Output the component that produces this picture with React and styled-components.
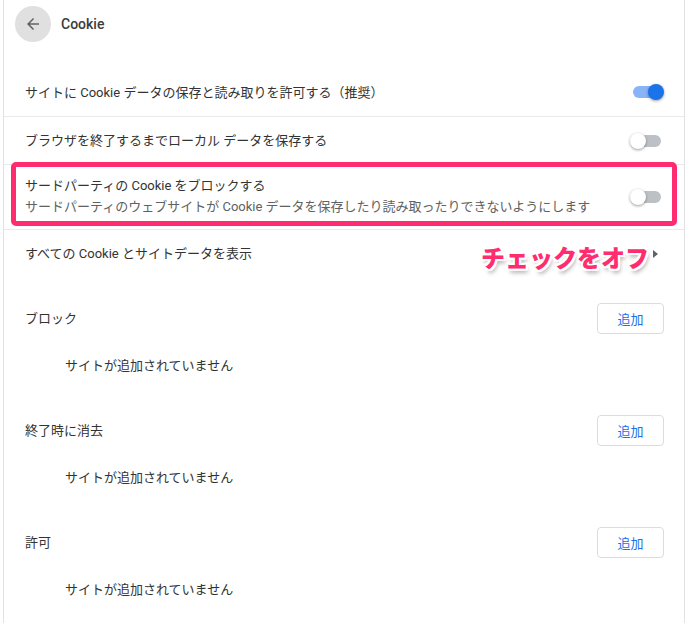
import styled, { createGlobalStyle } from 'styled-components'

const GlobalStyle = createGlobalStyle`
  html, body {
    margin: 0;
    padding: 0;
    background: #ffffff;
  }
  body {
    font-family: "Roboto", "Noto Sans CJK JP", sans-serif;
    color: #333333;
  }
`

export default function App() {
  return (
    <>
      <GlobalStyle />
      <Card>
        <Header>
          <BackButton aria-label="戻る">
            <svg width="18" height="18" viewBox="0 0 24 24">
              <path d="M20 11H7.83l5.59-5.59L12 4l-8 8 8 8 1.41-1.41L7.83 13H20v-2z" fill="#5f6368" />
            </svg>
          </BackButton>
          <Title>Cookie</Title>
        </Header>

        <Row>
          <Label>サイトに Cookie データの保存と読み取りを許可する（推奨）</Label>
          <Toggle $on />
        </Row>
        <Row $border>
          <Label>ブラウザを終了するまでローカル データを保存する</Label>
          <Toggle />
        </Row>
        <Row $border $tall>
          <TextBlock>
            <Label>サードパーティの Cookie をブロックする</Label>
            <SubLabel>サードパーティのウェブサイトが Cookie データを保存したり読み取ったりできないようにします</SubLabel>
          </TextBlock>
          <Toggle />
          <Highlight />
        </Row>
        <Row $border>
          <Label>すべての Cookie とサイトデータを表示</Label>
          <Arrow />
          <Callout>チェックをオフ</Callout>
        </Row>

        {['ブロック', '終了時に消去', '許可'].map((name) => (
          <Section key={name}>
            <SectionHead>
              <Label>{name}</Label>
              <AddButton>追加</AddButton>
            </SectionHead>
            <EmptyItem>サイトが追加されていません</EmptyItem>
          </Section>
        ))}
      </Card>
    </>
  )
}

const Card = styled.div`
  margin-left: 3px;
  width: 682px;
  border-left: 1px solid #e2e2e2;
  border-right: 1px solid #e2e2e2;
  min-height: 623px;
  box-sizing: border-box;
`

const Header = styled.div`
  display: flex;
  align-items: center;
  height: 48px;
  padding-left: 11px;
  margin-bottom: 20px;
`

const BackButton = styled.div`
  width: 36px;
  height: 36px;
  border-radius: 50%;
  background: #e0e0e0;
  display: flex;
  align-items: center;
  justify-content: center;
`

const Title = styled.div`
  margin-left: 10px;
  font-size: 14px;
  font-weight: 500;
  color: #3c3c3c;
`

const Row = styled.div`
  position: relative;
  display: flex;
  align-items: center;
  justify-content: space-between;
  box-sizing: border-box;
  height: ${(p) => (p.$tall ? '65px' : '48px')};
  padding: 0 23px 0 21px;
  border-top: ${(p) => (p.$border ? '1px solid #e8eaed' : 'none')};
`

const TextBlock = styled.div`
  display: flex;
  flex-direction: column;
  gap: 4px;
  padding-bottom: 2px;
`

const Label = styled.div`
  font-size: 13px;
  color: #333333;
  line-height: 17px;
`

const SubLabel = styled.div`
  font-size: 13px;
  color: #616161;
  line-height: 17px;
`

const Toggle = styled.div`
  position: relative;
  width: 28px;
  height: 12px;
  border-radius: 6px;
  background: ${(p) => (p.$on ? '#8ab4f8' : '#bdc1c6')};

  &::after {
    content: '';
    position: absolute;
    top: -2px;
    left: ${(p) => (p.$on ? '15px' : '-3px')};
    width: 16px;
    height: 16px;
    border-radius: 50%;
    background: ${(p) => (p.$on ? '#1a73e8' : '#ffffff')};
    box-shadow: 0 1px 3px rgba(0, 0, 0, 0.4);
  }
`

const Highlight = styled.div`
  position: absolute;
  top: -3px;
  bottom: 3px;
  left: 7px;
  right: 7px;
  border: 5px solid #ff2d6f;
  border-radius: 5px;
  pointer-events: none;
`

const Arrow = styled.div`
  width: 0;
  height: 0;
  margin-right: 3px;
  border-top: 4px solid transparent;
  border-bottom: 4px solid transparent;
  border-left: 5px solid #5f6368;
`

const Callout = styled.div`
  position: absolute;
  left: 477px;
  top: 12px;
  font-family: "Noto Sans CJK JP", sans-serif;
  font-size: 24px;
  font-weight: 900;
  color: #ff2d6f;
  line-height: 30px;
  text-shadow:
    2px 0 0 #fff, -2px 0 0 #fff, 0 2px 0 #fff, 0 -2px 0 #fff,
    2px 2px 0 #fff, -2px -2px 0 #fff, 2px -2px 0 #fff, -2px 2px 0 #fff,
    2px 4px 4px rgba(0, 0, 0, 0.35);
`

const Section = styled.div`
  padding-top: 21px;
`

const SectionHead = styled.div`
  display: flex;
  align-items: center;
  justify-content: space-between;
  height: 40px;
  padding: 0 20px 0 21px;
`

const AddButton = styled.button`
  width: 67px;
  height: 31px;
  border: 1px solid #dadce0;
  border-radius: 4px;
  background: #ffffff;
  color: #1a73e8;
  font-family: "Roboto", "Noto Sans CJK JP", sans-serif;
  font-size: 13px;
  padding: 0;
`

const EmptyItem = styled.div`
  display: flex;
  align-items: center;
  height: 51px;
  padding: 2px 0 0 61px;
  box-sizing: border-box;
  font-size: 13px;
  color: #333333;
`
